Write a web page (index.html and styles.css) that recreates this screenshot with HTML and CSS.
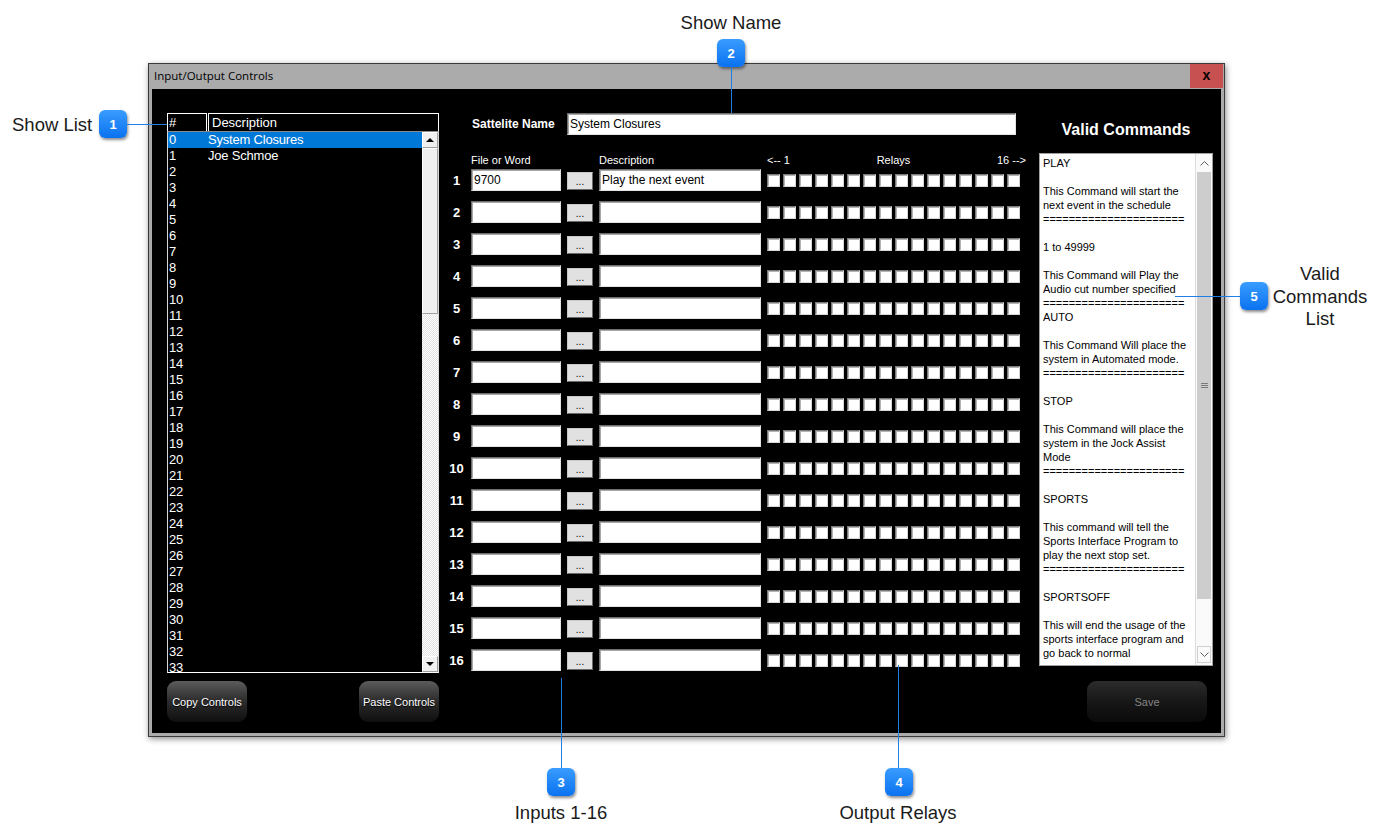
FILE: index.html
```html
<!DOCTYPE html>
<html lang="en">

<head>
    <meta charset="UTF-8">
    <title>Input/Output Controls</title>
    <link rel="stylesheet" href="styles.css">
</head>

<body>
    <div class="page">
        <div class="window">
            <div class="titlebar">
                <span class="title">Input/Output Controls</span>
                <span class="close">x</span>
            </div>
            <div class="content">
                <div class="left-col">
                    <div class="list-head">
                        <div class="lh-num">#</div>
                        <div class="lh-desc">Description</div>
                    </div>
                    <div class="list-box">
                        <div class="list-items" id="showList"></div>
                        <div class="classic-scroll">
                            <div class="cs-btn"><span class="tri-up"></span></div>
                            <div class="cs-thumb"></div>
                            <div class="cs-track"></div>
                            <div class="cs-btn"><span class="tri-down"></span></div>
                        </div>
                    </div>
                    <div class="btn-row">
                        <button class="glass">Copy Controls</button>
                        <button class="glass">Paste Controls</button>
                    </div>
                </div>

                <div class="mid-col">
                    <div class="name-row">
                        <label class="name-label">Sattelite Name</label>
                        <input class="field name-field" type="text" value="System Closures">
                    </div>
                    <div class="io-row heads">
                        <span></span>
                        <span>File or Word</span>
                        <span></span>
                        <span>Description</span>
                        <div class="relay-head">
                            <span>&lt;-- 1</span>
                            <span>Relays</span>
                            <span>16 --&gt;</span>
                        </div>
                    </div>
                    <div class="io-rows" id="ioRows"></div>
                </div>

                <div class="right-col">
                    <h2>Valid Commands</h2>
                    <div class="cmd-box">
<div class="cmd-text">PLAY

This Command will start the
next event in the schedule
======================

1 to 49999

This Command will Play the
Audio cut number specified
======================
AUTO

This Command Will place the
system in Automated mode.
======================

STOP

This Command will place the
system in the Jock Assist
Mode
======================

SPORTS

This command will tell the
Sports Interface Program to
play the next stop set.
======================

SPORTSOFF

This will end the usage of the
sports interface program and
go back to normal</div>
                        <div class="modern-scroll">
                            <div class="ms-btn">
                                <svg width="9" height="5" viewBox="0 0 9 5"><polyline points="0.5,4.5 4.5,0.5 8.5,4.5" fill="none" stroke="#606060" stroke-width="1"/></svg>
                            </div>
                            <div class="ms-thumb"><span class="grip"></span></div>
                            <div class="ms-track"></div>
                            <div class="ms-btn boxed">
                                <svg width="9" height="5" viewBox="0 0 9 5"><polyline points="0.5,0.5 4.5,4.5 8.5,0.5" fill="none" stroke="#606060" stroke-width="1"/></svg>
                            </div>
                        </div>
                    </div>
                    <div class="save-row">
                        <button class="glass save">Save</button>
                    </div>
                </div>
            </div>
        </div>

        <!-- help callouts -->
        <div class="label show-list-label">Show List</div>
        <div class="callout c1">1</div>
        <div class="hline l1"></div>

        <div class="label show-name-label">Show Name</div>
        <div class="callout c2">2</div>
        <div class="vline l2"></div>

        <div class="vline l3"></div>
        <div class="callout c3">3</div>
        <div class="label inputs-label">Inputs 1-16</div>

        <div class="vline l4"></div>
        <div class="callout c4">4</div>
        <div class="label relays-label">Output Relays</div>

        <div class="hline l5"></div>
        <div class="callout c5">5</div>
        <div class="label commands-label">Valid<br>Commands<br>List</div>
    </div>

    <script>
        const showList = document.getElementById('showList');
        const shows = { 0: 'System Closures', 1: 'Joe Schmoe' };

        for (let i = 0; i < 34; i++) {
            const row = document.createElement('div');
            row.className = 'list-row' + (i === 0 ? ' selected' : '');
            row.innerHTML = '<span class="ln">' + i + '</span><span class="ld">' + (shows[i] || '') + '</span>';
            showList.appendChild(row);
        }

        const ioRows = document.getElementById('ioRows');

        for (let r = 1; r <= 16; r++) {
            let boxes = '';
            for (let b = 0; b < 16; b++) {
                boxes += '<span class="relay"></span>';
            }
            ioRows.insertAdjacentHTML('beforeend',
                '<div class="io-row">' +
                '<span class="row-num">' + r + '</span>' +
                '<input class="field" type="text" value="' + (r === 1 ? '9700' : '') + '">' +
                '<button class="dots">...</button>' +
                '<input class="field" type="text" value="' + (r === 1 ? 'Play the next event' : '') + '">' +
                '<div class="relays">' + boxes + '</div>' +
                '</div>');
        }
    </script>
</body>

</html>
```

FILE: styles.css
```css
* {
    box-sizing: border-box;
}

body {
    margin: 0;
    background-color: #ffffff;
    font-family: "Liberation Sans", Arial, sans-serif;
}

.page {
    position: relative;
    width: 1392px;
    height: 839px;
    padding: 63px 0 0 148px;
    overflow: hidden;
}

/* window frame */

.window {
    width: 1077px;
    border: 1px solid #3a3a3a;
    background-color: #ababab;
    box-shadow: 1px 2px 6px rgba(0, 0, 0, 0.45);
}

.titlebar {
    height: 25px;
    display: flex;
    justify-content: space-between;
    align-items: flex-start;
    padding-left: 5px;
}

.title {
    font-family: "Open Sans", "Noto Sans", sans-serif;
    font-size: 11.5px;
    line-height: 24px;
    color: #000;
}

.close {
    width: 33px;
    height: 24px;
    margin-right: 1px;
    background-color: #c75050;
    color: #000;
    font-weight: bold;
    font-size: 14px;
    line-height: 22px;
    text-align: center;
}

.content {
    margin: 0 3px 3px;
    height: 644px;
    background-color: #000;
    display: flex;
    align-items: flex-start;
    padding: 24px 0 0 15px;
}

/* show list */

.left-col {
    width: 272px;
}

.list-head {
    display: flex;
    gap: 1px;
    height: 18px;
    color: #fff;
    font-size: 13px;
    line-height: 17px;
}

.list-head div {
    border: 1px solid #fff;
    border-bottom: none;
    padding-left: 1px;
}

.lh-num {
    width: 40px;
}

.lh-desc {
    flex: 1;
    padding-left: 3px !important;
}

.list-box {
    display: flex;
    height: 542px;
    border: 1px solid #d8d8d8;
    border-top-color: #8a8a8a;
    border-bottom-color: #fff;
}

.list-items {
    flex: 1;
    overflow: hidden;
}

.list-row {
    display: flex;
    height: 16px;
    line-height: 16px;
    color: #fff;
    font-size: 13px;
    letter-spacing: -0.2px;
}

.list-row.selected {
    background-color: #0078d7;
}

.ln {
    width: 40px;
    padding-left: 1px;
}

.classic-scroll {
    width: 16px;
    display: flex;
    flex-direction: column;
}

.cs-btn,
.cs-thumb {
    background-color: #f0f0f0;
    border: 1px solid;
    border-color: #fff #a0a0a0 #a0a0a0 #fff;
}

.cs-btn {
    height: 16px;
    display: flex;
    align-items: center;
    justify-content: center;
}

.cs-thumb {
    height: 166px;
}

.cs-track {
    flex: 1;
    background-color: #fff;
    background-image: repeating-conic-gradient(#e2e2e2 0 25%, #ffffff 0 50%);
    background-size: 2px 2px;
}

.tri-up,
.tri-down {
    width: 0;
    height: 0;
    border-left: 4px solid transparent;
    border-right: 4px solid transparent;
}

.tri-up {
    border-bottom: 4px solid #000;
}

.tri-down {
    border-top: 4px solid #000;
}

.btn-row {
    display: flex;
    justify-content: space-between;
    margin-top: 8px;
}

.glass {
    width: 80px;
    height: 41px;
    border: none;
    border-radius: 9px;
    background: linear-gradient(#5c5c5c, #2f2f2f 45%, #0e0e0e);
    color: #fff;
    font-family: "Liberation Sans", Arial, sans-serif;
    font-size: 11px;
    padding: 0;
    text-shadow: 0 1px 1px #000;
}

/* inputs and relays */

.mid-col {
    width: 575px;
    margin-left: 7px;
}

.name-row {
    display: flex;
    align-items: center;
    height: 22px;
    padding-left: 25px;
}

.name-label {
    width: 96px;
    color: #fff;
    font-weight: bold;
    font-size: 12px;
    padding-left: 1px;
}

.field {
    height: 22px;
    border: 1px solid;
    border-color: #6e6e6e #e3e3e3 #e3e3e3 #6e6e6e;
    box-shadow: inset 1px 1px 0 #a8a8a8;
    background-color: #fff;
    font-family: "Liberation Sans", Arial, sans-serif;
    font-size: 12px;
    color: #000;
    padding: 0 2px;
    margin: 0;
    width: 100%;
}

.name-field.field {
    width: 449px;
}

.io-row {
    display: grid;
    grid-template-columns: 19px 90px 26px 162px 254px;
    column-gap: 6px;
    align-items: center;
    height: 22px;
}

.io-row.heads {
    margin-top: 18px;
    height: 16px;
    align-items: start;
    color: #fff;
    font-size: 11px;
    line-height: 14px;
}

.relay-head {
    display: flex;
    justify-content: space-between;
    margin-right: -5px;
}

.io-rows {
    display: flex;
    flex-direction: column;
    gap: 10px;
}

.row-num {
    color: #fff;
    font-weight: bold;
    font-size: 13px;
    text-align: center;
    padding-left: 2px;
}

.dots {
    width: 26px;
    height: 18px;
    margin-top: 2px;
    padding: 0;
    border: 1px solid;
    border-color: #c8c8c8 #6a6a6a #6a6a6a #c8c8c8;
    background-color: #e1e1e1;
    font-family: "Liberation Sans", Arial, sans-serif;
    font-size: 10px;
    line-height: 18px;
    color: #000;
}

.relays {
    display: flex;
    gap: 3px;
}

.relay {
    width: 13px;
    height: 13px;
    background-color: #fff;
    border: 1px solid;
    border-color: #7a7a7a #d4d4d4 #d4d4d4 #7a7a7a;
    box-shadow: inset 1px 1px 0 #b4b4b4;
}

/* valid commands */

.right-col {
    width: 174px;
    margin-left: 18px;
}

.right-col h2 {
    margin: 0;
    height: 40px;
    line-height: 34px;
    text-align: center;
    color: #fff;
    font-size: 16px;
}

.cmd-box {
    display: flex;
    height: 513px;
    border: 1px solid #a0a0a0;
    background-color: #fff;
}

.cmd-text {
    flex: 1;
    overflow: hidden;
    white-space: pre-line;
    padding: 2px 0 0 3px;
    font-size: 11px;
    line-height: 14px;
    color: #000;
}

.modern-scroll {
    width: 17px;
    display: flex;
    flex-direction: column;
    padding: 1px;
    border-left: 1px solid #dcdcdc;
    background-color: #fafafa;
}

.ms-btn {
    height: 17px;
    display: flex;
    align-items: center;
    justify-content: center;
}

.ms-btn.boxed {
    border: 1px solid #d0d0d0;
    margin-bottom: 1px;
}

.ms-thumb {
    height: 427px;
    background-color: #cdcdcd;
    display: flex;
    align-items: center;
    justify-content: center;
}

.grip {
    width: 7px;
    height: 5px;
    border-top: 1px solid #7a7a7a;
    border-bottom: 1px solid #7a7a7a;
    background: linear-gradient(transparent 1px, #7a7a7a 1px, #7a7a7a 2px, transparent 2px);
}

.ms-track {
    flex: 1;
}

.save-row {
    display: flex;
    justify-content: flex-end;
    margin-top: 15px;
    padding-right: 6px;
}

.glass.save {
    width: 120px;
    background: linear-gradient(#2c2c2c, #171717 50%, #0a0a0a);
    color: #858585;
    text-shadow: none;
}

/* help callouts */

.label {
    position: absolute;
    font-size: 18.5px;
    color: #1a1a1a;
    line-height: 22px;
}

.show-list-label {
    left: 12px;
    top: 114px;
}

.show-name-label {
    left: 631px;
    width: 200px;
    top: 12px;
    text-align: center;
}

.inputs-label {
    left: 461px;
    width: 200px;
    top: 802px;
    text-align: center;
}

.relays-label {
    left: 798px;
    width: 200px;
    top: 802px;
    text-align: center;
}

.commands-label {
    left: 1260px;
    width: 120px;
    top: 263px;
    line-height: 22.5px;
    text-align: center;
}

.callout {
    position: absolute;
    width: 28px;
    height: 28px;
    border-radius: 6px;
    background: linear-gradient(#3a9cff, #0a72f0);
    color: #fff;
    font-weight: bold;
    font-size: 13px;
    display: flex;
    align-items: center;
    justify-content: center;
    box-shadow: 1px 2px 3px rgba(0, 0, 0, 0.45);
}

.c1 { left: 99px; top: 110px; }
.c2 { left: 717px; top: 39px; }
.c3 { left: 547px; top: 768px; }
.c4 { left: 885px; top: 768px; }
.c5 { left: 1240px; top: 282px; }

.hline,
.vline {
    position: absolute;
    background-color: #1f7ee6;
}

.hline {
    height: 1px;
}

.vline {
    width: 1px;
}

.l1 { left: 127px; top: 124px; width: 40px; }
.l2 { left: 731px; top: 67px; height: 46px; }
.l3 { left: 561px; top: 678px; height: 90px; }
.l4 { left: 898px; top: 665px; height: 103px; }
.l5 { left: 1175px; top: 296px; width: 65px; }
```
